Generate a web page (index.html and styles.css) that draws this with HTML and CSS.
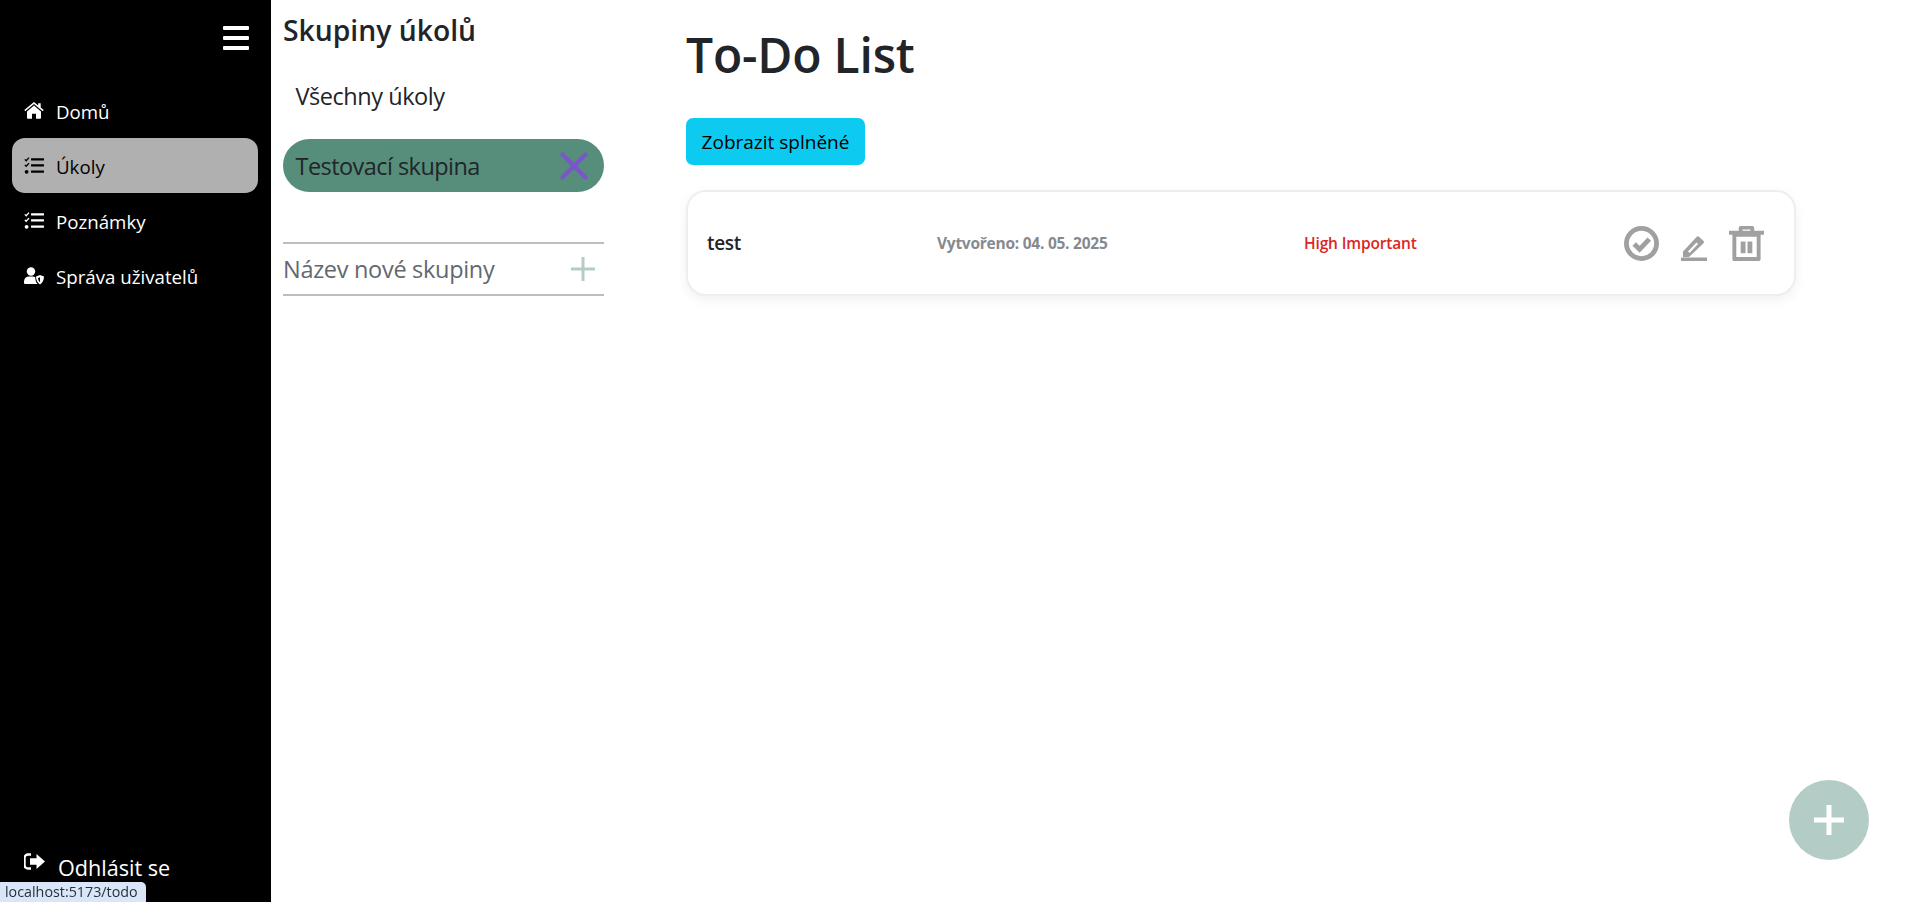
FILE: index.html
```html
<!DOCTYPE html>
<html lang="cs">
<head>
<meta charset="utf-8">
<title>To-Do List</title>
<link rel="stylesheet" href="styles.css">
</head>
<body>
<div class="app">
  <aside class="sidebar">
    <div class="burger-row">
      <svg class="burger" viewBox="0 0 26 24"><rect y="0" width="26" height="4" rx="1"/><rect y="10" width="26" height="4" rx="1"/><rect y="20" width="26" height="4" rx="1"/></svg>
    </div>
    <nav class="nav">
      <a class="nav-item"><svg class="nav-icon" viewBox="0 0 20 18"><path d="M10 3.6 3 9.4V16a.8.8 0 0 0 .8.8h4.2v-5h4v5h4.2a.8.8 0 0 0 .8-.8V9.400z"/><path d="M10 0 .3 8l1 1.200L10 2l8.700 7.200 1-1.200-3-2.500V1.200h-2.500v2.200z"/></svg><span>Domů</span></a>
      <a class="nav-item active"><svg class="nav-icon" viewBox="0 0 20 18"><use href="#tasks"/></svg><span>Úkoly</span></a>
      <a class="nav-item"><svg class="nav-icon" viewBox="0 0 20 18"><defs><g id="tasks"><path d="M.8 2.400 2.200 3.800 5 .6M.8 7.900 2.200 9.300 5 6.100" fill="none" stroke="currentColor" stroke-width="1.300"/><circle cx="2.600" cy="14.800" r="1.900"/><rect x="7" y="1.200" width="13" height="2.300" rx=".4"/><rect x="7" y="7.200" width="13" height="2.300" rx=".4"/><rect x="7" y="13.400" width="13" height="2.300" rx=".4"/></g></defs><use href="#tasks"/></svg><span>Poznámky</span></a>
      <a class="nav-item"><svg class="nav-icon" viewBox="0 0 20 18"><circle cx="7" cy="4.500" r="4.200"/><path d="M0 16v-1.800A5.200 5.200 0 0 1 5.200 9.500h3.600c1 0 1.800.3 2.500.7-.1 2.600.7 5.200 2.300 6.800H1a1 1 0 0 1-1-1z"/><path d="M16 8l4 1.500c0 3.500-1.500 6.500-4 8-2.500-1.500-4-4.500-4-8z"/><path d="M16 10.200v5c-1.200-1-1.900-2.500-2-4z" fill="#000"/></svg><span>Správa uživatelů</span></a>
    </nav>
    <a class="logout"><svg class="logout-icon" viewBox="0 0 21 18"><path d="M7 1.500H4A3.500 3.500 0 0 0 .5 5v7A3.500 3.500 0 0 0 4 15.500h3" fill="none" stroke="currentColor" stroke-width="2.400"/><path d="M12.500 1 21 8.500 12.500 16v-4.300H6V5.300h6.500z"/></svg><span>Odhlásit se</span></a>
  </aside>

  <section class="groups">
    <h2 class="groups-title">Skupiny úkolů</h2>
    <div class="group">Všechny úkoly</div>
    <div class="group selected">
      <span>Testovací skupina</span>
      <svg class="group-x" viewBox="0 0 26 26"><path d="M3 3 23 23M23 3 3 23"/></svg>
    </div>
    <div class="new-group">
      <span>Název nové skupiny</span>
      <svg class="new-plus" viewBox="0 0 24 24"><path d="M12 0v24M0 12h24"/></svg>
    </div>
  </section>

  <main class="main">
    <h1 class="title">To-Do List</h1>
    <button class="toggle">Zobrazit splněné</button>
    <article class="card">
      <div class="task-name">test</div>
      <div class="task-date">Vytvořeno: 04. 05. 2025</div>
      <div class="task-priority">High Important</div>
      <div class="task-actions">
        <svg class="act act-check" viewBox="0 0 36 36"><circle cx="18" cy="18" r="15.500" fill="none" stroke="currentColor" stroke-width="5"/><path d="M10.500 18.500 16 24 26 13.500" fill="none" stroke="currentColor" stroke-width="5"/></svg>
        <svg class="act act-edit" viewBox="0 0 26 28"><path d="M2 18.500 15.500 4 a2 2 0 0 1 2.800 0l4 3.700a2 2 0 0 1 0 2.800L8 24H2z"/><path d="M7 18.500 15.500 9.500l1.500 1.400L8.500 20z" fill="#fff"/><rect y="24.500" width="26" height="3.500"/></svg>
        <svg class="act act-trash" viewBox="0 0 36 36"><path d="M10 5V2a2 2 0 0 1 2-2h12a2 2 0 0 1 2 2v3h10v4H0V5zM14 5h8V3.500h-8z" fill-rule="evenodd"/><path d="M3.500 8h29v26.500A1.500 1.500 0 0 1 31 36H5a1.500 1.500 0 0 1-1.500-1.500zM7.500 11v21h21V11z" fill-rule="evenodd"/><rect x="12" y="16" width="5" height="12"/><rect x="19" y="16" width="5" height="12"/></svg>
      </div>
    </article>
  </main>
</div>
<button class="fab" aria-label="Přidat"><svg viewBox="0 0 30 30"><path d="M15 0v30M0 15h30"/></svg></button>
<div class="status">localhost:5173/todo</div>
</body>
</html>
```
FILE: styles.css
```css
* { box-sizing: border-box; }
html, body { margin: 0; height: 100%; overflow: hidden; }
body { font-family: "Open Sans", "Noto Sans", sans-serif; color: #212529; background: #fff; }

.app { display: flex; height: 902px; }

.sidebar { width: 271px; flex: none; background: #000; color: #fff; display: flex; flex-direction: column; padding: 26px 13px 0 12px; }
.burger-row { display: flex; justify-content: flex-end; padding-right: 9px; }
.burger { width: 26px; height: 24px; fill: #fff; display: block; }
.nav { display: flex; flex-direction: column; margin-top: 33px; }
.nav-item { height: 55px; display: flex; align-items: center; gap: 12px; padding: 2px 0 0 12px; border-radius: 13px; font-size: 18.700px; color: #fff; }
.nav-item.active { background: #b0b0b0; color: #000; }
.nav-icon { width: 20px; height: 18px; fill: currentColor; flex: none; margin-top: -1px; }
.logout { margin-top: auto; margin-bottom: 18px; display: flex; align-items: flex-start; gap: 13px; padding-left: 12px; font-size: 21.600px; line-height: 32px; }
.logout-icon { width: 21px; height: 18px; fill: currentColor; margin-top: 1px; }

.groups { width: 321px; flex: none; margin-left: 12px; padding-top: 10px; }
.groups-title { margin: 0 0 19px; font-size: 28.300px; font-weight: 600; line-height: 40px; }
.group { height: 53px; display: flex; align-items: center; justify-content: space-between; padding: 0 15px 0 12.500px; font-size: 23.500px; letter-spacing: -.45px; border-radius: 27px; margin-bottom: 17px; }
.group.selected { background: #578e7b; margin-bottom: 50px; letter-spacing: -.55px; }
.group-x { width: 30px; height: 30px; fill: none; stroke: #7a57c9; stroke-width: 3.800; stroke-linecap: round; }
.new-group { height: 54px; border-top: 2px solid #bdbdbd; border-bottom: 2px solid #bdbdbd; display: flex; align-items: center; justify-content: space-between; padding-right: 9px; font-size: 23.500px; letter-spacing: -.3px; color: #62686e; }
.new-plus { width: 24px; height: 24px; stroke: #b3cdc6; stroke-width: 3; fill: none; }

.main { flex: 1; min-width: 0; padding: 19px 118px 0 82px; }
.title { margin: 0 0 27px; font-size: 48px; font-weight: 600; letter-spacing: -.2px; line-height: 72px; }
.toggle { display: block; width: 179px; height: 47px; border: 0; border-radius: 7px; background: #0dcaf0; color: #000; font: 19px "Open Sans", sans-serif; padding: 0; }
.card { margin-top: 25px; height: 106px; width: 1110px; background: #fff; border: 2px solid #eee; border-radius: 20px; box-shadow: 0 4px 12px rgba(0,0,0,.06); display: grid; grid-template-columns: 230px 367px 1fr auto; align-items: center; padding: 0 30px 0 19px; }
.task-name { font-size: 19px; font-weight: 600; letter-spacing: -.3px; }
.task-date { font-size: 15.500px; font-weight: 700; color: #858a8f; letter-spacing: -.25px; }
.task-priority { font-size: 15.500px; font-weight: 600; color: #dc2626; letter-spacing: -.15px; }
.task-actions { display: flex; align-items: center; gap: 22px; color: #a0a0a0; }
.act { fill: currentColor; display: block; }
.act-check { width: 35px; height: 35px; }
.act-edit { width: 26px; height: 28px; margin-top: 7px; }
.act-trash { width: 35px; height: 35px; }

.fab { position: fixed; left: 1789px; top: 780px; width: 80px; height: 80px; border: 0; border-radius: 50%; background: #b3cdc6; padding: 0; display: flex; align-items: center; justify-content: center; }
.fab svg { width: 30px; height: 30px; stroke: #fff; stroke-width: 5; fill: none; }
.status { position: fixed; left: 0; bottom: 0; height: 20px; width: 146px; background: #d9e6fa; border-top-right-radius: 5px; font-size: 14.300px; line-height: 20px; padding-left: 5px; color: #2a2f35; white-space: nowrap; overflow: hidden; }
```
